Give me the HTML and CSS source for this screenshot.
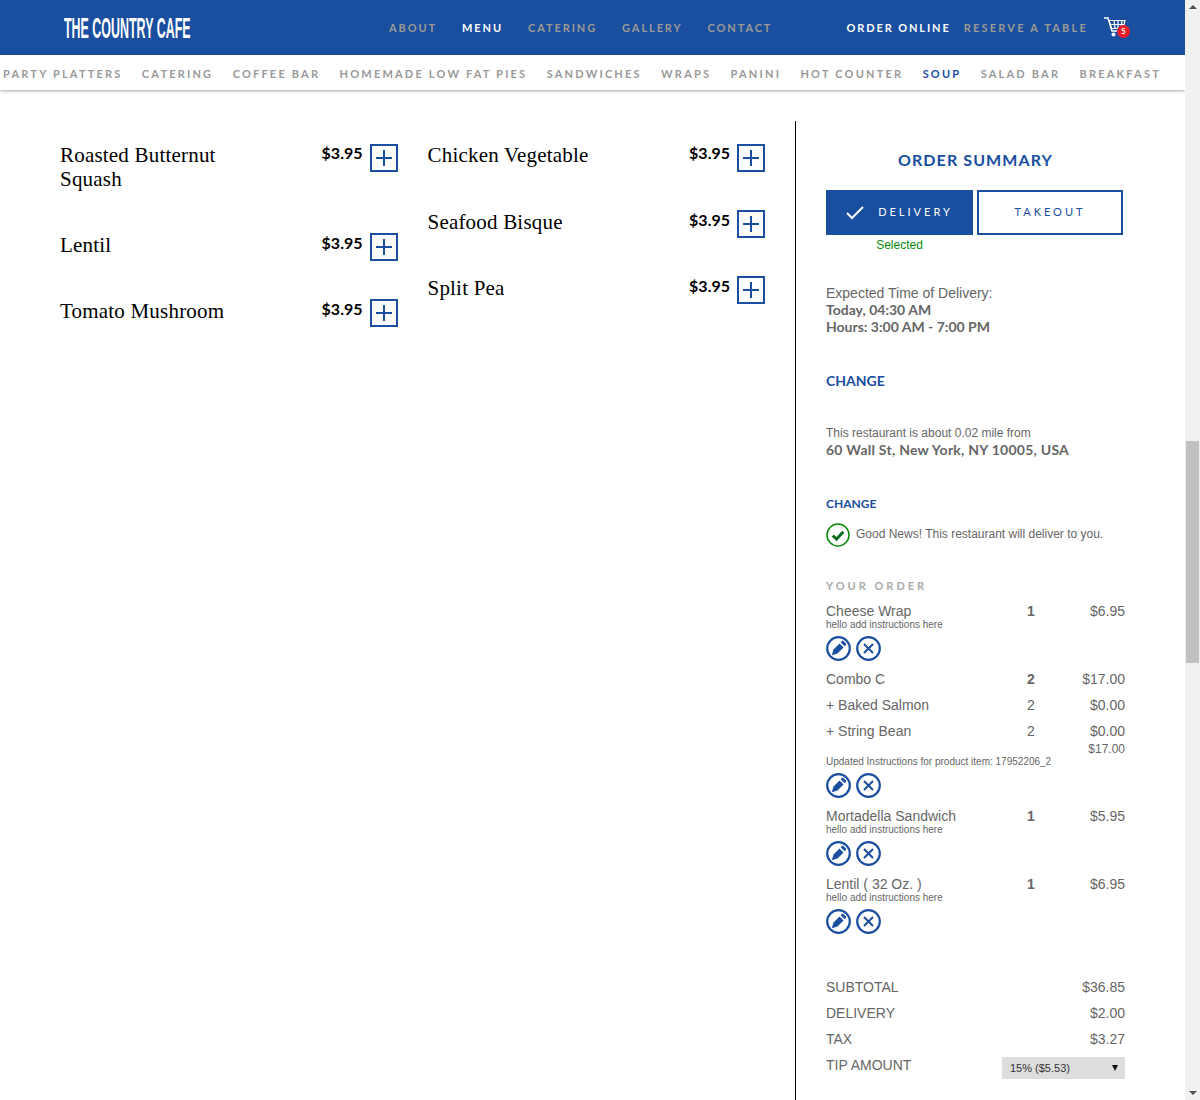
FILE: index.html
```html
<!DOCTYPE html>
<html>
  <head>
    <title>The Country Cafe</title>
    <link rel="stylesheet" href="styles.css">
  </head>

  <body>
    <svg class="sprites" width="0" height="0">
      <symbol id="icon-edit" viewBox="0 0 25 25">
        <circle cx="12.5" cy="12.5" r="11.3" fill="none" stroke="currentColor" stroke-width="2.2" />
        <path d="M5.800 19.200l1.700-5.700 6-6 4 4-6 6z" fill="currentColor" />
        <path d="M14.700 6.300l1-1c.6-.6 1.400-.6 2 0l2 2c.6.6.6 1.400 0 2l-1 1z" fill="currentColor" />
      </symbol>
      <symbol id="icon-remove" viewBox="0 0 25 25">
        <circle cx="12.5" cy="12.5" r="11.3" fill="none" stroke="currentColor" stroke-width="2.2" />
        <path d="M8 8l9 9M17 8l-9 9" fill="none" stroke="currentColor" stroke-width="2" />
      </symbol>
      <symbol id="icon-plus" viewBox="0 0 28 28">
        <rect x="1" y="1" width="26" height="26" fill="none" stroke="currentColor" stroke-width="2" />
        <path d="M14 6v16M6 14h16" fill="none" stroke="currentColor" stroke-width="2" />
      </symbol>
    </svg>

    <div id="page">
      <div id="content">
        <header id="topbar">
          <a class="logo">THE COUNTRY CAFE</a>
          <nav class="main-nav">
            <a>ABOUT</a>
            <a class="active">MENU</a>
            <a>CATERING</a>
            <a>GALLERY</a>
            <a>CONTACT</a>
          </nav>
          <nav class="side-nav">
            <a class="active">ORDER ONLINE</a>
            <a class="reserve">RESERVE A TABLE</a>
          </nav>
          <div class="cart">
            <svg width="24" height="22" viewBox="0 0 24 22">
              <path d="M1 2h4l4 13h11" fill="none" stroke="#fff" stroke-width="1.5" />
              <path d="M6 4.500h16l-2 8H8.500zM11 4.500l1 8M15 4.500v8M19 4.500l-1 8M7 8.500h14" fill="none" stroke="#fff" stroke-width="1.200" />
              <circle cx="10.500" cy="18.500" r="2" fill="#fff" />
              <circle cx="18" cy="18.500" r="2" fill="#fff" />
            </svg>
            <span class="cart-count">5</span>
          </div>
        </header>

        <nav id="categories">
          <a>PARTY PLATTERS</a>
          <a>CATERING</a>
          <a>COFFEE BAR</a>
          <a>HOMEMADE LOW FAT PIES</a>
          <a>SANDWICHES</a>
          <a>WRAPS</a>
          <a>PANINI</a>
          <a>HOT COUNTER</a>
          <a class="active">SOUP</a>
          <a>SALAD BAR</a>
          <a>BREAKFAST</a>
        </nav>

        <div id="main">
          <section id="menu">
            <div class="menu-col">
              <div class="menu-item">
                <div class="item-name">Roasted Butternut Squash</div>
                <div class="item-price">$3.95</div>
                <svg class="item-add"><use href="#icon-plus" /></svg>
              </div>
              <div class="menu-item">
                <div class="item-name">Lentil</div>
                <div class="item-price">$3.95</div>
                <svg class="item-add"><use href="#icon-plus" /></svg>
              </div>
              <div class="menu-item">
                <div class="item-name">Tomato Mushroom</div>
                <div class="item-price">$3.95</div>
                <svg class="item-add"><use href="#icon-plus" /></svg>
              </div>
            </div>
            <div class="menu-col">
              <div class="menu-item">
                <div class="item-name">Chicken Vegetable</div>
                <div class="item-price">$3.95</div>
                <svg class="item-add"><use href="#icon-plus" /></svg>
              </div>
              <div class="menu-item">
                <div class="item-name">Seafood Bisque</div>
                <div class="item-price">$3.95</div>
                <svg class="item-add"><use href="#icon-plus" /></svg>
              </div>
              <div class="menu-item">
                <div class="item-name">Split Pea</div>
                <div class="item-price">$3.95</div>
                <svg class="item-add"><use href="#icon-plus" /></svg>
              </div>
            </div>
          </section>

          <aside id="summary">
            <h2 class="summary-title">ORDER SUMMARY</h2>
            <div class="order-type">
              <button class="type-btn selected" type="button">
                <svg width="18" height="14" viewBox="0 0 18 14"><path d="M1 7l5 5L17 1" fill="none" stroke="#fff" stroke-width="2" /></svg>
                <span>DELIVERY</span>
              </button>
              <button class="type-btn" type="button"><span>TAKEOUT</span></button>
            </div>
            <div class="selected-label">Selected</div>

            <div class="expected">
              Expected Time of Delivery:
              <b class="today">Today, 04:30 AM</b>
              <b>Hours: 3:00 AM - 7:00 PM</b>
            </div>
            <a class="change change-time">CHANGE</a>

            <div class="distance">This restaurant is about 0.02 mile from</div>
            <div class="address">60 Wall St, New York, NY 10005, USA</div>
            <a class="change change-address">CHANGE</a>

            <div class="good-news">
              <svg width="24" height="24" viewBox="0 0 24 24">
                <circle cx="12" cy="12" r="11" fill="none" stroke="#0a8a0a" stroke-width="1.500" />
                <path d="M6.800 12.500l3.700 3.700 6.800-7.400" fill="none" stroke="#0b6b22" stroke-width="3" />
              </svg>
              <span>Good News! This restaurant will deliver to you.</span>
            </div>

            <div class="order-heading">YOUR ORDER</div>

            <div class="order-line">
              <span>Cheese Wrap</span><b>1</b><span class="amount">$6.95</span>
            </div>
            <div class="note">hello add instructions here</div>
            <div class="line-actions">
              <svg><use href="#icon-edit" /></svg>
              <svg><use href="#icon-remove" /></svg>
            </div>

            <div class="order-line">
              <span>Combo C</span><b>2</b><span class="amount">$17.00</span>
            </div>
            <div class="order-line">
              <span>+ Baked Salmon</span><span>2</span><span class="amount">$0.00</span>
            </div>
            <div class="order-line">
              <span>+ String Bean</span><span>2</span><span class="amount">$0.00</span>
            </div>
            <div class="combo-total">$17.00</div>
            <div class="note">Updated Instructions for product item: 17952206_2</div>
            <div class="line-actions">
              <svg><use href="#icon-edit" /></svg>
              <svg><use href="#icon-remove" /></svg>
            </div>

            <div class="order-line">
              <span>Mortadella Sandwich</span><b>1</b><span class="amount">$5.95</span>
            </div>
            <div class="note">hello add instructions here</div>
            <div class="line-actions">
              <svg><use href="#icon-edit" /></svg>
              <svg><use href="#icon-remove" /></svg>
            </div>

            <div class="order-line">
              <span>Lentil ( 32 Oz. )</span><b>1</b><span class="amount">$6.95</span>
            </div>
            <div class="note">hello add instructions here</div>
            <div class="line-actions">
              <svg><use href="#icon-edit" /></svg>
              <svg><use href="#icon-remove" /></svg>
            </div>

            <div class="totals">
              <div class="total-row"><span>SUBTOTAL</span><span>$36.85</span></div>
              <div class="total-row"><span>DELIVERY</span><span>$2.00</span></div>
              <div class="total-row"><span>TAX</span><span>$3.27</span></div>
              <div class="total-row">
                <span>TIP AMOUNT</span>
                <div class="tip-select">15% ($5.53)<span class="tip-arrow"></span></div>
              </div>
            </div>
          </aside>
        </div>
      </div>

      <div id="scrollbar">
        <span class="arrow-up"></span>
        <div class="scroll-track"><div class="scroll-thumb"></div></div>
        <span class="arrow-down"></span>
      </div>
    </div>
  </body>
</html>
```

FILE: styles.css
```css
html, body {
  margin: 0;
  height: 1100px;
  overflow: hidden;
}

body {
  background-color: #ffffff;
  font-family: 'Liberation Sans', sans-serif;
  color: #666666;
}

.sprites {
  display: block;
  height: 0;
}

#page {
  display: flex;
  height: 1100px;
}

#content {
  flex: 1;
  min-width: 0;
}

/* top bar */

#topbar {
  display: flex;
  align-items: center;
  height: 55px;
  background-color: #1a4e9f;
  font-family: 'Lato', sans-serif;
  font-size: 11px;
  font-weight: 700;
  letter-spacing: 1.9px;
  color: #9c9a94;
}

.logo {
  width: 126px;
  margin-left: 64px;
  font-family: 'Liberation Sans Narrow', 'Liberation Sans', sans-serif;
  font-size: 30px;
  font-weight: 700;
  letter-spacing: 0;
  white-space: nowrap;
  color: #ffffff;
  transform: scaleX(0.415);
  transform-origin: left center;
}

.main-nav {
  display: flex;
  gap: 25px;
  margin-left: 199px;
}

.side-nav {
  display: flex;
  gap: 13px;
  margin-left: 74px;
}

.reserve {
  letter-spacing: 2.2px;
}

#topbar .active {
  color: #ffffff;
}

.cart {
  position: relative;
  width: 24px;
  height: 22px;
  margin-left: 15px;
  margin-top: -2px;
}

.cart-count {
  position: absolute;
  top: 9px;
  left: 14px;
  width: 13px;
  height: 13px;
  border-radius: 50%;
  background-color: #ee1c25;
  color: #ffffff;
  font-size: 8px;
  line-height: 13px;
  letter-spacing: 0;
  text-align: center;
}

/* category bar */

#categories {
  display: flex;
  justify-content: space-between;
  align-items: center;
  box-sizing: border-box;
  height: 35px;
  padding: 2px 24px 0 3px;
  background-color: #ffffff;
  box-shadow: 0 1px 3px rgba(0, 0, 0, 0.35);
  font-family: 'Lato', sans-serif;
  font-size: 11px;
  font-weight: 700;
  letter-spacing: 2.2px;
  color: #999999;
  white-space: nowrap;
}

#categories .active {
  color: #1a4e9f;
}

/* menu */

#main {
  display: flex;
  padding-top: 31px;
}

#menu {
  display: flex;
  gap: 30px;
  width: 705px;
  margin-left: 60px;
  margin-right: 30px;
  padding-top: 22px;
}

.menu-col {
  flex: 1;
}

.menu-item {
  display: flex;
  align-items: flex-start;
  margin-bottom: 38px;
}

.menu-col:first-child .menu-item:first-child {
  margin-bottom: 42px;
}

.item-name {
  flex: 1;
  padding-right: 70px;
  font-family: 'Liberation Serif', serif;
  font-size: 21px;
  line-height: 24px;
  letter-spacing: 0.2px;
  color: #000000;
}

.item-price {
  margin: 0 7px 0 0;
  font-family: 'Lato', sans-serif;
  font-size: 16px;
  font-weight: 700;
  line-height: 20px;
  color: #000000;
}

.item-add {
  width: 28px;
  height: 28px;
  color: #1a4e9f;
  flex: none;
}

.menu-item:first-child .item-add {
  margin-top: 1px;
}

/* order summary */

#summary {
  width: 299px;
  padding: 0 30px;
  border-left: 1px solid #000000;
  height: 979px;
  overflow: hidden;
  flex: none;
}

.summary-title {
  margin: 29px 0 21px;
  font-family: 'Lato', sans-serif;
  font-size: 16px;
  font-weight: 700;
  line-height: 19px;
  letter-spacing: 1.1px;
  text-align: center;
  color: #1a4e9f;
}

.order-type {
  display: flex;
  gap: 4px;
}

.type-btn {
  display: flex;
  align-items: center;
  justify-content: center;
  gap: 14px;
  width: 146px;
  height: 45px;
  padding: 0;
  border: 2px solid #1a4e9f;
  background-color: #ffffff;
  font-family: 'Lato', sans-serif;
  font-size: 11px;
  letter-spacing: 3px;
  color: #1a4e9f;
}

.type-btn span {
  padding-bottom: 2px;
}

.type-btn.selected {
  width: 147px;
  background-color: #1a4e9f;
  color: #ffffff;
}

.selected-label {
  width: 147px;
  margin-top: 3px;
  font-size: 12px;
  line-height: 14px;
  text-align: center;
  color: #0a8a0a;
}

.expected {
  margin-top: 33px;
  font-size: 14px;
  line-height: 17px;
}

.expected b {
  display: block;
  font-family: 'Lato', sans-serif;
  font-weight: 700;
  line-height: 17px;
}

.expected .today {
  margin-top: -1px;
}

.address {
  margin-top: 1px;
  font-family: 'Lato', sans-serif;
  font-size: 14px;
  font-weight: 700;
  line-height: 17px;
  letter-spacing: 0.25px;
}

.change {
  display: block;
  font-family: 'Lato', sans-serif;
  font-weight: 700;
  color: #1a4e9f;
}

.change-time {
  margin-top: 37px;
  font-size: 14px;
  line-height: 17px;
}

.distance {
  margin-top: 37px;
  font-size: 12px;
  line-height: 14px;
}

.change-address {
  margin-top: 39px;
  font-size: 12px;
  line-height: 14px;
}

.good-news {
  display: flex;
  align-items: center;
  gap: 6px;
  margin-top: 12px;
  font-size: 12px;
}

.good-news span {
  padding-bottom: 2px;
}

.order-heading {
  margin-top: 32px;
  font-family: 'Lato', sans-serif;
  font-size: 11px;
  font-weight: 700;
  line-height: 13px;
  letter-spacing: 3px;
  color: #aaaaaa;
}

.order-line {
  display: grid;
  grid-template-columns: 201px 1fr auto;
  margin-top: 10px;
  font-size: 14px;
  line-height: 16px;
}

.order-heading + .order-line {
  margin-top: 11px;
}

.amount {
  text-align: right;
}

.note {
  font-size: 10px;
  line-height: 11px;
}

.line-actions {
  display: flex;
  gap: 5px;
  margin-top: 6px;
  color: #1a4e9f;
}

.line-actions svg {
  width: 25px;
  height: 25px;
}

.combo-total {
  margin-top: 3px;
  font-size: 12px;
  line-height: 14px;
  text-align: right;
}

.totals {
  margin-top: 45px;
}

.total-row {
  display: flex;
  justify-content: space-between;
  height: 26px;
  font-size: 14px;
  line-height: 16px;
}

.tip-select {
  position: relative;
  width: 115px;
  height: 22px;
  padding-left: 8px;
  background-color: #dddddd;
  font-size: 11px;
  line-height: 22px;
  color: #333333;
}

.tip-arrow {
  position: absolute;
  top: 8px;
  right: 7px;
  border-left: 3px solid transparent;
  border-right: 3px solid transparent;
  border-top: 6px solid #111111;
}

/* scrollbar */

#scrollbar {
  display: flex;
  flex-direction: column;
  align-items: center;
  width: 15px;
  height: 1100px;
  background-color: #f1f1f1;
  flex: none;
}

.scroll-track {
  flex: 1;
  width: 100%;
  padding-top: 427px;
  box-sizing: border-box;
}

.scroll-thumb {
  height: 222px;
  margin: 0 1px;
  background-color: #c1c1c1;
}

.arrow-up,
.arrow-down {
  display: block;
  margin: 5px 0;
  border-left: 4px solid transparent;
  border-right: 4px solid transparent;
}

.arrow-up {
  border-bottom: 4px solid #505050;
}

.arrow-down {
  border-top: 4px solid #505050;
}
```
